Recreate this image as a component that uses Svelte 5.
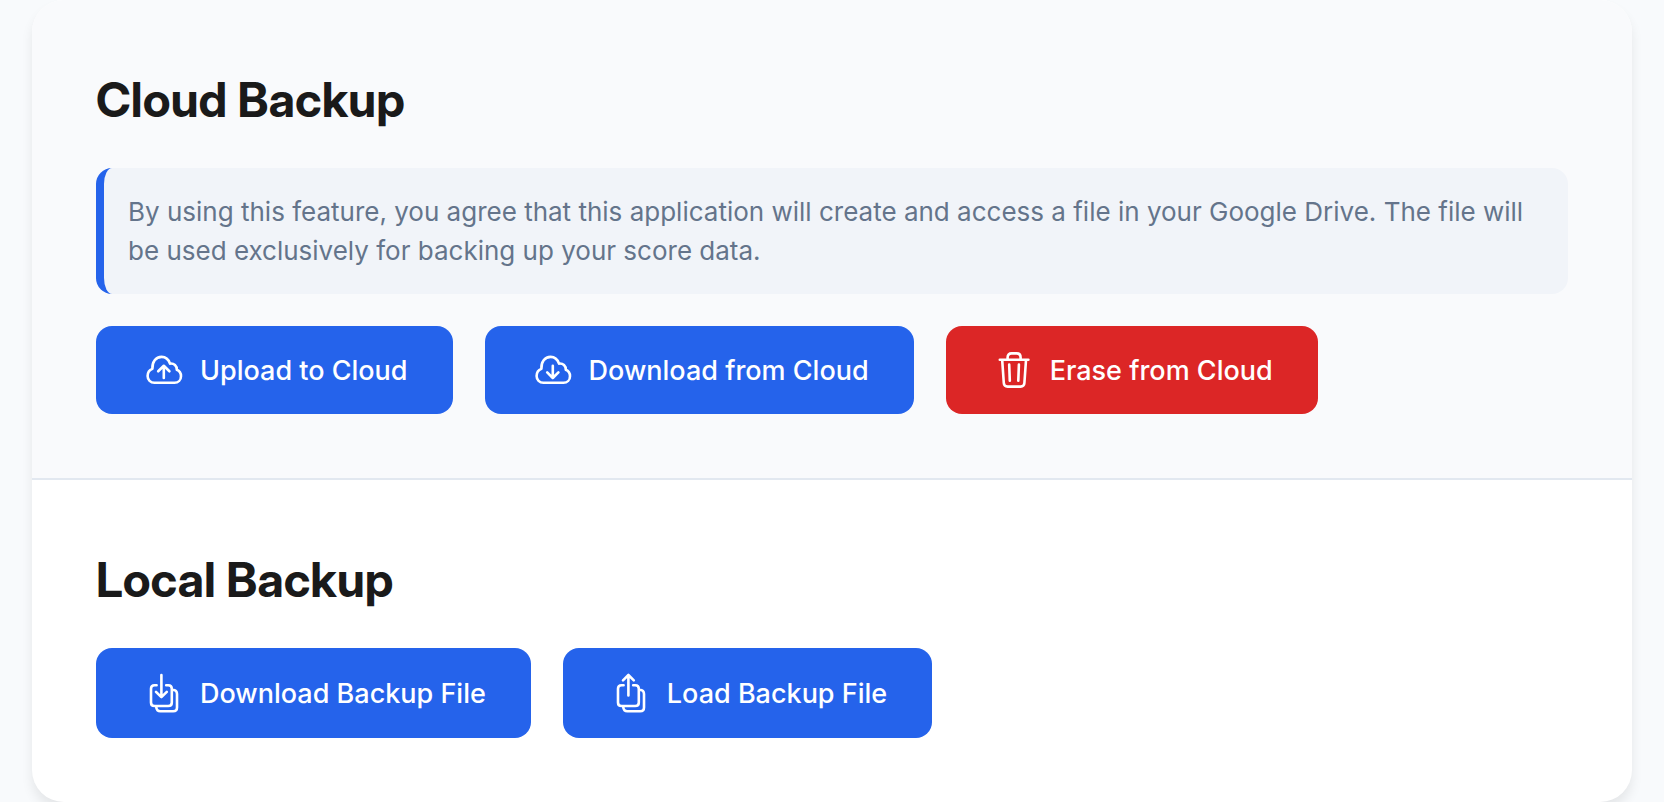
<script>
  const cloud =
    'M10.4 32.8C6.6 32.8 3.6 30 3.6 26.1C3.6 22.6 5.6 19.9 8.4 18.9C8 12 11.8 6.9 17.6 6.9C21.6 6.9 24.6 9.6 26 13.6C30 13.1 33 15.8 32.8 19.8C35.6 21 37 23.2 37 26.2C37 30 34.2 32.8 30.4 32.8Z';
  const files =
    'M12.6 13.2H10.6Q7 13.2 7 16.8V30.4Q7 34 10.6 34H24.2Q27.8 34 27.8 30.4V16.8Q27.8 13.2 24.2 13.2H22.2M28.6 17.8Q33 18 33 22V35.4Q33 39.2 29.2 39.2H16.4Q12.6 39.2 12.2 34.8';
  const icons = {
    upload: [cloud, 'M19.8 28V15.9M14.2 21.3L19.8 15.8L25.4 21.3'],
    download: [cloud, 'M19.8 15.8V28M14.2 22.4L19.8 28L25.4 22.4'],
    trash: [
      'M5.8 9.8H34.4M13.6 9.4V7.4Q13.6 3.4 17.6 3.4H22.6Q26.6 3.4 26.6 7.4V9.4',
      'M8.2 10.2L9.8 33Q10 36.6 13.6 36.6H26.6Q30.2 36.6 30.4 33L32 10.2',
      'M15.2 14.6L15.8 30.6M24.9 14.6L24.3 30.6',
    ],
    save: [files, 'M17.4 3V25M12 19.8L17.4 25.2L22.8 19.8'],
    load: [files, 'M17.4 23.4V3.2M12 8.4L17.4 3L22.8 8.4'],
  };
  const cloudActions = [
    { label: 'Upload to Cloud', icon: 'upload' },
    { label: 'Download from Cloud', icon: 'download' },
    { label: 'Erase from Cloud', icon: 'trash', danger: true },
  ];
  const localActions = [
    { label: 'Download Backup File', icon: 'save' },
    { label: 'Load Backup File', icon: 'load' },
  ];
</script>

{#snippet actions(items, height)}
  <div class="actions">
    {#each items as item}
      <button type="button" class:danger={item.danger}>
        <svg width="40" {height} viewBox="0 0 40 {height}" aria-hidden="true">
          {#each icons[item.icon] as d}<path {d} />{/each}
        </svg>
        <span>{item.label}</span>
      </button>
    {/each}
  </div>
{/snippet}

<main>
  <div class="card">
    <section class="cloud">
      <h2>Cloud Backup</h2>
      <p>
        By using this feature, you agree that this application will create and access a file in your
        Google Drive. The file will be used exclusively for backing up your score data.
      </p>
      {@render actions(cloudActions, 40)}
    </section>
    <section>
      <h2>Local Backup</h2>
      {@render actions(localActions, 42)}
    </section>
  </div>
</main>

<style>
  :global(body) {
    margin: 0;
    background: #f8fafc;
  }
  main {
    padding: 0 32px;
    font-family: Inter, 'Liberation Sans', sans-serif;
    color: #1a1a1a;
  }
  .card {
    overflow: hidden;
    border-radius: 32px;
    background: #fff;
    box-shadow: 0 8px 12px rgba(0, 0, 0, 0.08);
  }
  section {
    padding: 64px;
  }
  .cloud {
    background: #f9fafc;
    border-bottom: 2px solid #e2e8f0;
  }
  h2 {
    margin: 0 0 32px;
    font-family: 'Inter Display', Inter, sans-serif;
    font-size: 48px;
    line-height: 72px;
    font-weight: 700;
  }
  p {
    margin: 0 0 32px;
    padding: 24px;
    border-left: 8px solid #2563eb;
    border-radius: 16px;
    background: #f1f4f9;
    color: #64748b;
    font-size: 26px;
    line-height: 39px;
  }
  .actions {
    display: flex;
    flex-wrap: wrap;
    gap: 32px;
  }
  button {
    display: flex;
    align-items: center;
    gap: 16px;
    padding: 24px 45px 24px 48px;
    border: 0;
    border-radius: 16px;
    background: #2563eb;
    color: #fff;
    font-family: inherit;
    font-size: 27px;
    line-height: 38px;
    font-weight: 500;
    cursor: pointer;
  }
  button span {
    padding-top: 2px;
  }
  button.danger {
    background: #dc2626;
  }
  svg {
    flex: none;
    fill: none;
    stroke: currentColor;
    stroke-width: 2.6;
    stroke-linecap: round;
    stroke-linejoin: round;
  }
</style>
